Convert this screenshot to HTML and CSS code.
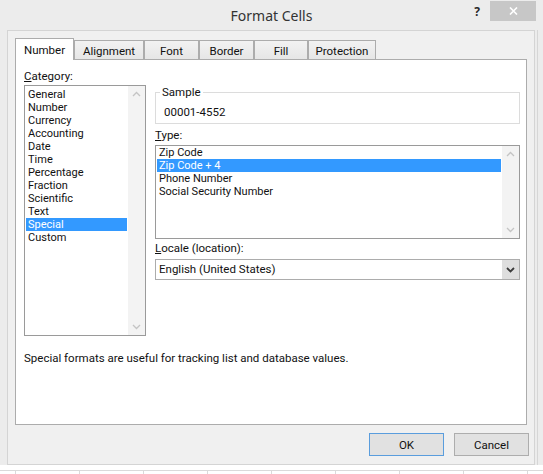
FILE: index.html
```html
<!DOCTYPE html>
<html lang="en">
<head>
<meta charset="utf-8">
<title>Format Cells</title>
<link rel="stylesheet" href="styles.css">
</head>
<body>
<div class="window">
  <div class="titlebar">
    <div class="spacer"></div>
    <div class="title">Format Cells</div>
    <div class="controls">
      <span class="help">?</span>
      <span class="close">
        <svg width="9" height="8" viewBox="0 0 9 8"><path d="M1 0.5 L8 7.5 M8 0.5 L1 7.5" stroke="#fff" stroke-width="1.6" fill="none"/></svg>
      </span>
    </div>
  </div>
  <div class="frame">
    <div class="client">
      <div class="tabs">
        <div class="tab active w-number">Number</div>
        <div class="tab w-align">Alignment</div>
        <div class="tab w-font">Font</div>
        <div class="tab w-border">Border</div>
        <div class="tab w-fill">Fill</div>
        <div class="tab w-prot">Protection</div>
      </div>
      <div class="panel">
        <div class="panel-main">
          <div class="cat-col">
            <div class="label cat-label"><u>C</u>ategory:</div>
            <div class="listbox cat-list">
              <div class="items">
                <div class="item">General</div>
                <div class="item">Number</div>
                <div class="item">Currency</div>
                <div class="item">Accounting</div>
                <div class="item">Date</div>
                <div class="item">Time</div>
                <div class="item">Percentage</div>
                <div class="item">Fraction</div>
                <div class="item">Scientific</div>
                <div class="item">Text</div>
                <div class="item sel">Special</div>
                <div class="item">Custom</div>
              </div>
              <div class="vscroll">
                <svg class="chev" width="17" height="17" viewBox="0 0 17 17"><polyline points="5,10 8.5,6.5 12,10" stroke="#c4c4c4" stroke-width="1.3" fill="none"/></svg>
                <svg class="chev" width="17" height="17" viewBox="0 0 17 17"><polyline points="5,7 8.5,10.5 12,7" stroke="#c4c4c4" stroke-width="1.3" fill="none"/></svg>
              </div>
            </div>
          </div>
          <div class="details-col">
            <fieldset class="sample">
              <legend>Sample</legend>
              <div class="sample-value">00001-4552</div>
            </fieldset>
            <div class="label type-label"><u>T</u>ype:</div>
            <div class="listbox type-list">
              <div class="items">
                <div class="item">Zip Code</div>
                <div class="item sel">Zip Code + 4</div>
                <div class="item">Phone Number</div>
                <div class="item">Social Security Number</div>
              </div>
              <div class="vscroll">
                <svg class="chev" width="17" height="17" viewBox="0 0 17 17"><polyline points="5,10 8.5,6.5 12,10" stroke="#c4c4c4" stroke-width="1.3" fill="none"/></svg>
                <svg class="chev" width="17" height="17" viewBox="0 0 17 17"><polyline points="5,7 8.5,10.5 12,7" stroke="#c4c4c4" stroke-width="1.3" fill="none"/></svg>
              </div>
            </div>
            <div class="label locale-label"><u>L</u>ocale (location):</div>
            <div class="combo">
              <div class="combo-text">English (United States)</div>
              <div class="combo-btn">
                <svg width="17" height="19" viewBox="0 0 17 19"><polyline points="5,8 8.5,11.5 12,8" stroke="#3a3a3a" stroke-width="1.8" fill="none"/></svg>
              </div>
            </div>
          </div>
        </div>
        <p class="desc">Special formats are useful for tracking list and database values.</p>
      </div>
      <div class="buttons">
        <button class="btn default">OK</button>
        <button class="btn">Cancel</button>
      </div>
    </div>
  </div>
</div>
<div class="sheet"></div>
</body>
</html>
```
FILE: styles.css
```css
* { box-sizing: border-box; }

html, body {
  margin: 0;
  padding: 0;
}

body {
  width: 543px;
  height: 474px;
  overflow: hidden;
  background: #ffffff;
  font-family: Roboto, "Noto Sans", sans-serif;
  font-size: 11.5px;
  color: #111;
}

.window {
  height: 465px;
  background: #ececec;
  display: flex;
  flex-direction: column;
}

.titlebar {
  height: 30px;
  flex: none;
  display: grid;
  grid-template-columns: 1fr auto 1fr;
  align-items: start;
}

.title {
  padding-top: 6px;
  font-family: "Noto Sans", sans-serif;
  font-size: 14px;
  line-height: 20px;
  color: #333;
}

.controls {
  justify-self: end;
  display: flex;
  align-items: flex-start;
  padding-top: 1px;
  padding-right: 7px;
}

.help {
  margin-top: 5px;
  margin-right: 10px;
  font-family: "Noto Sans", sans-serif;
  font-size: 12px;
  font-weight: bold;
  line-height: 12px;
  color: #2a2a2a;
}

.close {
  width: 46px;
  height: 20px;
  background: #c7c7c7;
  display: flex;
  align-items: center;
  justify-content: center;
}

.frame {
  flex: 1;
  display: flex;
  padding: 0 8px 0 7px;
}

.client {
  flex: 1;
  display: flex;
  flex-direction: column;
  background: #f0f0f0;
  border: 1px solid #d4d4d4;
  padding: 7px 7px 8px 7px;
  box-shadow: 2px 0 0 #ececec, 3px 0 0 #d6d6d6;
}

/* Tabs */
.tabs {
  display: flex;
  align-items: flex-end;
  height: 21px;
  flex: none;
}

.tab {
  height: 19px;
  border: 1px solid #acacac;
  border-bottom: none;
  background: linear-gradient(#f2f2f2, #e6e6e6);
  text-align: center;
  padding-top: 2px;
  line-height: 16px;
  white-space: nowrap;
}

.tab.active {
  height: 22px;
  margin-bottom: -1px;
  background: #fff;
  padding-top: 3px;
  position: relative;
  z-index: 1;
}

.w-number { width: 59px; }
.w-align { width: 70px; }
.w-font { width: 55px; }
.w-border { width: 55px; }
.w-fill { width: 54px; }
.w-prot { width: 68px; }

/* Panel */
.panel {
  flex: none;
  height: 366px;
  background: #fff;
  border: 1px solid #acacac;
  padding: 8px 0 0 8px;
}

.panel-main {
  display: flex;
  gap: 9px;
}

.label {
  line-height: 16px;
}

.cat-col {
  width: 122px;
  flex: none;
}

.cat-label {
  margin-bottom: 1px;
}

.listbox {
  display: flex;
  border: 1px solid #9a9a9a;
  background: #fff;
}

.items {
  flex: 1;
  padding: 0 1px;
}

.item {
  line-height: 13px;
  height: 13px;
  padding-left: 2px;
  white-space: nowrap;
  font-size: 11px;
}

.item.sel {
  background: #3399ff;
  color: #fff;
}

.vscroll {
  width: 17px;
  flex: none;
  background: #f3f3f3;
  display: flex;
  flex-direction: column;
  justify-content: space-between;
}

.chev { display: block; }

.cat-list {
  height: 251px;
}

.cat-list .items {
  padding-top: 2px;
}

.details-col {
  width: 365px;
  flex: none;
}

.sample {
  margin: 16px 0 0 0;
  padding: 4px 0 3px 4px;
  border: 1px solid #dcdcdc;
  min-width: 0;
}

.sample legend {
  padding: 0 2px;
  line-height: 16px;
}

.sample-value {
  padding-left: 4px;
  line-height: 16px;
}

.type-label {
  margin-top: 3px;
  margin-bottom: 2px;
}

.type-list {
  height: 94px;
}

.locale-label {
  margin-top: 1px;
  margin-bottom: 3px;
}

.combo {
  height: 21px;
  display: flex;
  border: 1px solid #acacac;
  background: #fff;
}

.combo-text {
  flex: 1;
  padding-left: 3px;
  line-height: 19px;
}

.combo-btn {
  width: 17px;
  height: 19px;
  background: #dedede;
}

.combo-btn svg { display: block; }

.desc {
  margin: 14px 0 0 0;
  line-height: 16px;
}

/* Buttons */
.buttons {
  display: flex;
  justify-content: flex-end;
  gap: 10px;
  margin-top: 8px;
  margin-right: -2px;
}

.btn {
  width: 75px;
  height: 23px;
  border: 1px solid #adadad;
  background: #e1e1e1;
  font-family: inherit;
  font-size: 11.5px;
  color: #111;
  padding: 0;
}

.btn.default {
  border-color: #5a9ddd;
}

/* Spreadsheet behind the dialog */
.sheet {
  height: 9px;
  background:
    linear-gradient(#fff 0 5px, #dadada 5px 6px, transparent 6px),
    repeating-linear-gradient(90deg, transparent 0 15px, #dadada 15px 16px, transparent 16px 64px);
}
```
